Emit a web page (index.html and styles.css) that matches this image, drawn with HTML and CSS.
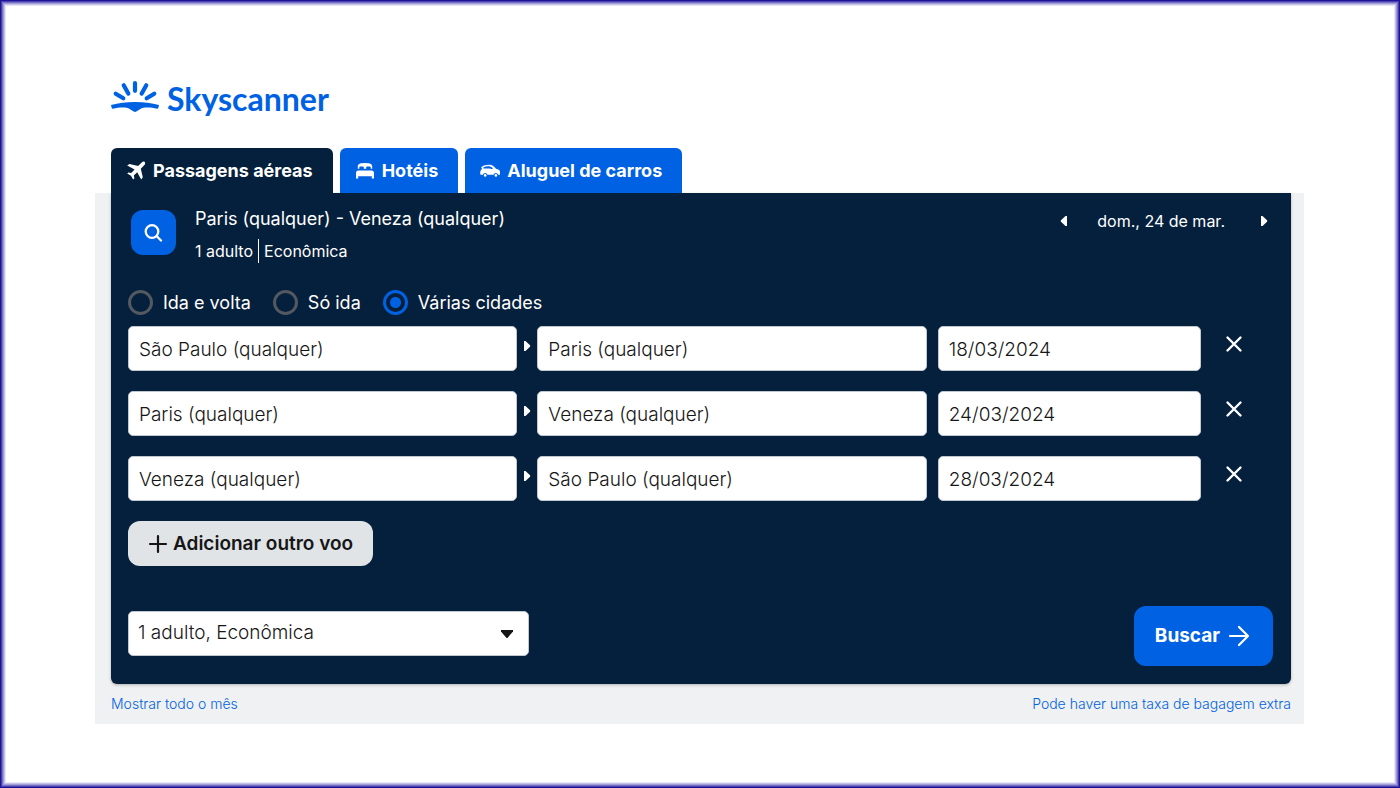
FILE: index.html
```html
<!DOCTYPE html>
<html lang="pt-BR">
<head>
<meta charset="utf-8">
<title>Skyscanner</title>
<link rel="stylesheet" href="styles.css">
</head>
<body>
<div class="page">
  <header class="header">
    <a class="logo" href="#">
      <svg class="logo-mark" viewBox="0 0 48 32" aria-hidden="true">
        <g stroke="currentColor" stroke-width="4.200" stroke-linecap="round" fill="none">
          <path d="M24 3.200v7.600M12.700 5.300l4.600 8.300M35.300 5.300l-4.600 8.300M4.700 13.700l7.600 4.600M43.300 13.700l-7.600 4.600"/>
        </g>
        <path fill="currentColor" d="M0 25C7.500 23 15 22 24 22s16.500 1 24 3l-.7 3c-.2.6-.7.8-1.200.7-4.500-1-8-1.500-12.100-1.100-2 .2-3.500.800-5 1.700l-3.700 2.200c-.9.500-1.700.5-2.600 0L19 29.300c-1.500-.9-3-1.500-5-1.700-4.100-.4-7.600.1-12.100 1.100-.5.1-1-.1-1.200-.7z"/>
      </svg>
      <span class="logo-text">Skyscanner</span>
    </a>
  </header>
  <nav class="tabs">
    <button class="tab tab-active" type="button">
      <svg class="tab-icon" viewBox="0 0 20 20" aria-hidden="true"><path fill="currentColor" d="M18.700 .9c-.9-.8-2-.3-3 .5l-3.600 3.600-8.600-1.900L1.200 4.600 8.600 8.600 5.200 12 2.500 11.400 1.200 12.600 5 14.800 7.100 18.600 8.400 17.300 7.800 14.600 11.200 11.200 15.200 18.600 16.800 16.300 14.800 7.700 18.400 4.100c.8-1 1.100-2.300.3-3.200z"/></svg>
      Passagens aéreas
    </button>
    <button class="tab" type="button">
      <svg class="tab-icon" viewBox="0 0 20 20" aria-hidden="true"><path fill="currentColor" d="M2.800 7.800V5C3 2.600 6.500 2 10 2s7 .6 7.200 3v2.800h-1.500V6.300c0-.6-.4-.9-1-.9h-2.500c-.6 0-1 .3-1 .9v1.500H8.800V6.300c0-.6-.4-.9-1-.9H5.300c-.6 0-1 .3-1 .9v1.500zM3.500 9.500h13c1.600 0 2.500 1 2.500 2.500v5.500h-2.200v-2.300H3.200v2.300H1V12c0-1.500.9-2.500 2.500-2.500z"/></svg>
      Hotéis
    </button>
    <button class="tab" type="button">
      <svg class="tab-icon" viewBox="0 0 20 20" aria-hidden="true"><path fill="currentColor" fill-rule="evenodd" d="M1.200 6.200C3.500 4.300 6.500 3.600 9.500 3.700c3 .1 4.800 1.700 6.500 4l2.300.8c1.200.5 1.700 1.400 1.700 2.700v2.600h-1.800a2.400 2.400 0 0 0-4.600 0H7.500a2.400 2.400 0 0 0-4.600 0H.5C-.2 11.500.2 9.500 2 8l-.2-.6zM3 6.700l.7.8 5.500.1c1.200 0 1.900.2 3 .7l.6-1.100C10.500 5 6.500 4.700 3 6.700z"/><circle cx="5.200" cy="14.400" r="1.300" fill="currentColor"/><circle cx="15.900" cy="14.400" r="1.300" fill="currentColor"/></svg>
      Aluguel de carros
    </button>
  </nav>
  <main class="band">
    <form class="panel">
      <div class="summary">
        <button class="summary-search" type="button" aria-label="Pesquisar">
          <svg viewBox="0 0 20 20" width="20" height="20" fill="none" stroke="currentColor" stroke-width="2.300" stroke-linecap="round" aria-hidden="true"><circle cx="8" cy="8.500" r="6.300"/><path d="M12.800 13.300l4.200 4.200"/></svg>
        </button>
        <div class="summary-text">
          <div class="route">Paris (qualquer) - Veneza (qualquer)</div>
          <div class="details"><span>1 adulto</span><span class="details-cabin">Econômica</span></div>
        </div>
        <div class="date-nav">
          <button class="plain" type="button" aria-label="Dia anterior"><svg viewBox="0 0 8 12" width="8" height="12" aria-hidden="true"><path fill="currentColor" d="M7 1v10H5.500L1 6.700a1 1 0 0 1 0-1.400L5.500 1z"/></svg></button>
          <span class="date-label">dom., 24 de mar.</span>
          <button class="plain" type="button" aria-label="Próximo dia"><svg viewBox="0 0 8 12" width="8" height="12" aria-hidden="true"><path fill="currentColor" d="M1 1v10h1.500L7 6.700a1 1 0 0 0 0-1.400L2.500 1z"/></svg></button>
        </div>
      </div>
      <div class="trip-types">
        <label class="radio"><input type="radio" name="trip">Ida e volta</label>
        <label class="radio"><input type="radio" name="trip">Só ida</label>
        <label class="radio"><input type="radio" name="trip" checked>Várias cidades</label>
      </div>
      <div class="legs">
        <div class="leg">
          <input class="field" type="text" aria-label="Origem 1" value="São Paulo (qualquer)">
          <svg class="leg-arrow" viewBox="0 0 8 12" aria-hidden="true"><path fill="currentColor" d="M1 1v10h1.500L7 6.700a1 1 0 0 0 0-1.400L2.500 1z"/></svg>
          <input class="field" type="text" aria-label="Destino 1" value="Paris (qualquer)">
          <input class="field field-date" type="text" aria-label="Data 1" value="18/03/2024">
          <button class="plain remove" type="button" aria-label="Remover voo 1"><svg viewBox="0 0 18 18" width="18" height="18" fill="none" stroke="currentColor" stroke-width="2.400" stroke-linecap="round" aria-hidden="true"><path d="M2.500 2.500l13 13M15.500 2.500l-13 13"/></svg></button>
        </div>
        <div class="leg">
          <input class="field" type="text" aria-label="Origem 2" value="Paris (qualquer)">
          <svg class="leg-arrow" viewBox="0 0 8 12" aria-hidden="true"><path fill="currentColor" d="M1 1v10h1.500L7 6.700a1 1 0 0 0 0-1.400L2.500 1z"/></svg>
          <input class="field" type="text" aria-label="Destino 2" value="Veneza (qualquer)">
          <input class="field field-date" type="text" aria-label="Data 2" value="24/03/2024">
          <button class="plain remove" type="button" aria-label="Remover voo 2"><svg viewBox="0 0 18 18" width="18" height="18" fill="none" stroke="currentColor" stroke-width="2.400" stroke-linecap="round" aria-hidden="true"><path d="M2.500 2.500l13 13M15.500 2.500l-13 13"/></svg></button>
        </div>
        <div class="leg">
          <input class="field" type="text" aria-label="Origem 3" value="Veneza (qualquer)">
          <svg class="leg-arrow" viewBox="0 0 8 12" aria-hidden="true"><path fill="currentColor" d="M1 1v10h1.500L7 6.700a1 1 0 0 0 0-1.400L2.500 1z"/></svg>
          <input class="field" type="text" aria-label="Destino 3" value="São Paulo (qualquer)">
          <input class="field field-date" type="text" aria-label="Data 3" value="28/03/2024">
          <button class="plain remove" type="button" aria-label="Remover voo 3"><svg viewBox="0 0 18 18" width="18" height="18" fill="none" stroke="currentColor" stroke-width="2.400" stroke-linecap="round" aria-hidden="true"><path d="M2.500 2.500l13 13M15.500 2.500l-13 13"/></svg></button>
        </div>
      </div>
      <button class="add" type="button">
        <svg viewBox="0 0 20 20" width="20" height="20" fill="none" stroke="currentColor" stroke-width="2.200" stroke-linecap="round" aria-hidden="true"><path d="M10 2v16M2 10h16"/></svg>
        Adicionar outro voo
      </button>
      <div class="actions">
        <div class="select-wrap">
          <select class="field select" aria-label="Passageiros e classe"><option>1 adulto, Econômica</option></select>
          <svg class="caret" viewBox="0 0 12 8" aria-hidden="true"><path fill="currentColor" d="M0 0h12v1.500L6.700 7.700a1 1 0 0 1-1.400 0L0 1.500z"/></svg>
        </div>
        <button class="submit" type="submit">
          Buscar
          <svg viewBox="0 0 22 22" width="22" height="22" fill="none" stroke="currentColor" stroke-width="2.200" stroke-linecap="round" stroke-linejoin="round" aria-hidden="true"><path d="M2 11h18M11 2l9 9-9 9"/></svg>
        </button>
      </div>
    </form>
    <div class="links">
      <a href="#">Mostrar todo o mês</a>
      <a href="#">Pode haver uma taxa de bagagem extra</a>
    </div>
  </main>
</div>
</body>
</html>
```

FILE: styles.css
```css
* { box-sizing: border-box; }
body {
  margin: 0;
  font-family: Inter, "Open Sans", sans-serif;
  font-size: 18px;
  line-height: 24px;
  color: #161616;
  background: #fff;
}
button, input, select { font: inherit; color: inherit; }
button { cursor: pointer; border: 0; }
svg { display: block; flex: none; }

.page {
  min-height: 100vh;
  padding: 80px 96px 64px 95px;
  box-shadow:
    inset 0 0 0 1px #1c139a,
    inset 0 0 0 2px #4840ad,
    inset 0 0 0 3px #766fc3,
    inset 0 0 0 4px #a29dd7,
    inset 0 0 0 5px #c4c1e6,
    inset 0 0 0 6px #e8e7f6;
}
.header { padding: 0 16px 28px; }
.logo {
  display: inline-flex;
  align-items: flex-start;
  gap: 8px;
  height: 40px;
  color: #0062e3;
  text-decoration: none;
}
.logo-mark { width: 48px; height: 32px; }
.logo-text { font-family: Lato, sans-serif; font-size: 32px; font-weight: 700; line-height: 38px; }

.tabs { display: flex; gap: 7px; padding: 0 16px; }
.tab {
  display: flex;
  align-items: center;
  gap: 7px;
  height: 45px;
  padding: 0 20px 0 15px;
  border-radius: 6px 6px 0 0;
  background: #0062e3;
  color: #fff;
  font-weight: 700;
  white-space: nowrap;
}
.tab-active { background: #05203c; }
.tab-icon { width: 20px; height: 20px; }

.band { padding: 0 13px 8px 16px; background: #eff1f2; }
.panel {
  padding: 17px 18px 18px 17px;
  border-radius: 0 0 6px 6px;
  background: #05203c;
  color: #fff;
  box-shadow: 0 1px 3px rgba(37, 32, 31, .3);
}
.summary { display: flex; align-items: flex-start; height: 80px; padding-left: 3px; }
.summary-search {
  display: grid;
  place-items: center;
  width: 45px;
  height: 45px;
  margin-right: 19px;
  padding: 0;
  border-radius: 12px;
  background: #0062e3;
}
.summary-text { display: grid; gap: 8px; margin-top: -3px; }
.details { display: flex; font-size: 16px; }
.details-cabin { margin-left: 5px; padding-left: 5px; border-left: 1px solid #fff; }
.date-nav {
  display: flex;
  align-items: center;
  gap: 29px;
  height: 22px;
  margin-left: auto;
  padding-right: 5px;
  font-size: 16px;
}
.date-label { padding-right: 6px; }
.plain { display: grid; place-items: center; padding: 0; background: none; color: #fff; }

.trip-types { display: flex; gap: 22px; margin-bottom: 11px; }
.radio { display: flex; align-items: center; gap: 10px; height: 25px; }
.radio input {
  appearance: none;
  width: 25px;
  height: 25px;
  margin: 0;
  border: 3px solid #545860;
  border-radius: 50%;
}
.radio input:checked {
  border-color: #0062e3;
  background: radial-gradient(circle, #0062e3 5px, transparent 6px);
}

.legs { display: grid; gap: 20px; }
.leg {
  display: grid;
  grid-template-columns: 389fr 20px 389fr 11px 263fr 72px;
  align-items: center;
}
.leg-arrow { width: 8px; height: 12px; justify-self: center; margin-bottom: 6px; }
.field {
  width: 100%;
  height: 45px;
  padding: 1px 10px 0;
  border: 1px solid #c1c7cf;
  border-radius: 5px;
  background: #fff;
  color: #161616;
  font-size: 19px;
  font-weight: 300;
}
.field-date { grid-column: 5; }
.remove { justify-self: center; width: 24px; height: 24px; margin: 0 6px 10px 0; }

.add {
  display: flex;
  align-items: center;
  gap: 5px;
  height: 45px;
  margin-top: 20px;
  padding: 0 20px;
  border-radius: 12px;
  background: #e0e4e6;
  color: #161616;
  font-size: 19px;
  font-weight: 600;
}
.actions {
  display: flex;
  align-items: center;
  justify-content: space-between;
  margin-top: 40px;
}
.select-wrap { position: relative; width: 35%; margin-bottom: 6px; }
.select { display: block; appearance: none; padding: 0 9px; }
.caret {
  position: absolute;
  top: 19px;
  right: 16px;
  width: 12px;
  height: 8px;
  color: #161616;
  pointer-events: none;
}
.submit {
  display: flex;
  align-items: center;
  gap: 8px;
  height: 60px;
  padding: 0 23px 0 21px;
  border-radius: 12px;
  background: #0062e3;
  color: #fff;
  font-size: 19px;
  font-weight: 700;
}
.links {
  display: flex;
  justify-content: space-between;
  padding-top: 8px;
  font-size: 14px;
  font-weight: 300;
}
.links a { color: #0062e3; text-decoration: none; }
```
